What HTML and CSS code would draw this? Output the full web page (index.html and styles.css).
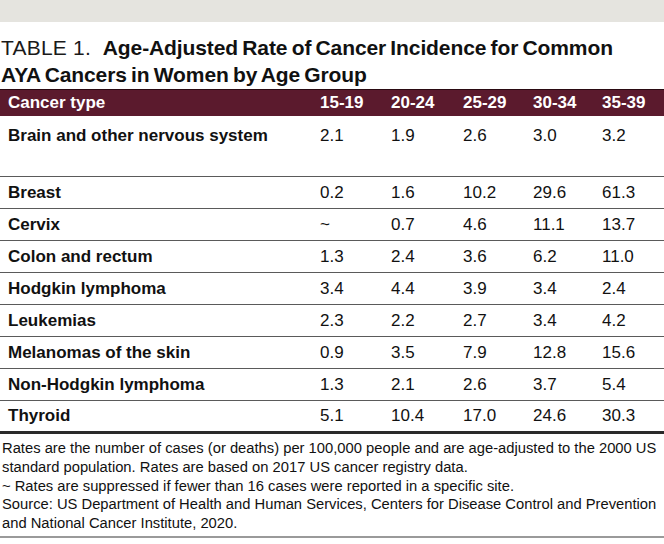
FILE: index.html
```html
<!DOCTYPE html>
<html lang="en">
<head>
<meta charset="utf-8">
<title>Table 1</title>
<link rel="stylesheet" href="styles.css">
</head>
<body>
<div class="band"></div>
<h1 class="title"><span class="label">TABLE 1.</span> <span class="head">Age-Adjusted Rate of Cancer Incidence for Common<br>AYA Cancers in Women by Age Group</span></h1>
<table class="data">
  <colgroup>
    <col class="c-name"><col class="c1"><col class="c2"><col class="c3"><col class="c4"><col class="c5">
  </colgroup>
  <thead>
    <tr><th>Cancer type</th><th>15-19</th><th>20-24</th><th>25-29</th><th>30-34</th><th>35-39</th></tr>
  </thead>
  <tbody>
    <tr class="tall"><th>Brain and other nervous system</th><td>2.1</td><td>1.9</td><td>2.6</td><td>3.0</td><td>3.2</td></tr>
    <tr><th>Breast</th><td>0.2</td><td>1.6</td><td>10.2</td><td>29.6</td><td>61.3</td></tr>
    <tr><th>Cervix</th><td>~</td><td>0.7</td><td>4.6</td><td>11.1</td><td>13.7</td></tr>
    <tr><th>Colon and rectum</th><td>1.3</td><td>2.4</td><td>3.6</td><td>6.2</td><td>11.0</td></tr>
    <tr><th>Hodgkin lymphoma</th><td>3.4</td><td>4.4</td><td>3.9</td><td>3.4</td><td>2.4</td></tr>
    <tr><th>Leukemias</th><td>2.3</td><td>2.2</td><td>2.7</td><td>3.4</td><td>4.2</td></tr>
    <tr><th>Melanomas of the skin</th><td>0.9</td><td>3.5</td><td>7.9</td><td>12.8</td><td>15.6</td></tr>
    <tr><th>Non-Hodgkin lymphoma</th><td>1.3</td><td>2.1</td><td>2.6</td><td>3.7</td><td>5.4</td></tr>
    <tr><th>Thyroid</th><td>5.1</td><td>10.4</td><td>17.0</td><td>24.6</td><td>30.3</td></tr>
  </tbody>
</table>
<div class="notes">
  <p>Rates are the number of cases (or deaths) per 100,000 people and are age-adjusted to the 2000 US standard population. Rates are based on 2017 US cancer registry data.</p>
  <p>~ Rates are suppressed if fewer than 16 cases were reported in a specific site.</p>
  <p>Source: US Department of Health and Human Services, Centers for Disease Control and Prevention and National Cancer Institute, 2020.</p>
</div>
</body>
</html>
```
FILE: styles.css
```css
html, body {
  margin: 0;
  padding: 0;
  background: #ffffff;
  color: #111111;
  font-family: "Liberation Sans", Arial, sans-serif;
}

.band {
  height: 22px;
  background: #e5e4df;
}

.title {
  margin: 12px 0 0 0;
  padding: 0 0 0 1px;
  font-size: 21px;
  line-height: 27px;
  font-weight: 700;
  color: #111111;
  height: 54px;
}

.title .label {
  font-weight: 400;
  letter-spacing: 0.2px;
  margin-right: 6px;
  color: #1a1a1a;
}

.title .head {
  word-spacing: -1.5px;
  letter-spacing: -0.1px;
}

.data {
  width: 664px;
  border-collapse: collapse;
  table-layout: fixed;
  margin-top: 1px;
  font-size: 17px;
  line-height: 20px;
}

.c-name { width: 320px; }
.c1 { width: 71px; }
.c2 { width: 72px; }
.c3 { width: 70px; }
.c4 { width: 69px; }
.c5 { width: 62px; }

.data th,
.data td {
  text-align: left;
  padding: 0;
  vertical-align: middle;
  white-space: nowrap;
}

.data thead tr {
  background: #5b1a2d;
  border-top: 1px solid #2a0a12;
  height: 26px;
}

.data thead th {
  color: #ffffff;
  font-weight: 700;
  padding-top: 1px;
}

.data thead th:first-child,
.data tbody th {
  padding-left: 8px;
}

.data tbody th {
  font-weight: 700;
}

.data tbody td {
  font-weight: 400;
}

.data tbody tr {
  height: 32px;
  border-top: 1px solid #5a5a5a;
}

.data tbody tr.tall {
  height: 61px;
  border-top: none;
}

.data tbody tr.tall th,
.data tbody tr.tall td {
  vertical-align: top;
  padding-top: 10px;
}

.data tbody tr:last-child {
  border-bottom: 3px solid #2a2a2a;
}

.notes {
  padding: 5px 0 3px 2px;
  font-size: 14.75px;
  line-height: 18.75px;
  color: #111111;
  border-bottom: 2px solid #9a9a9a;
}

.notes p {
  margin: 0;
}
```
